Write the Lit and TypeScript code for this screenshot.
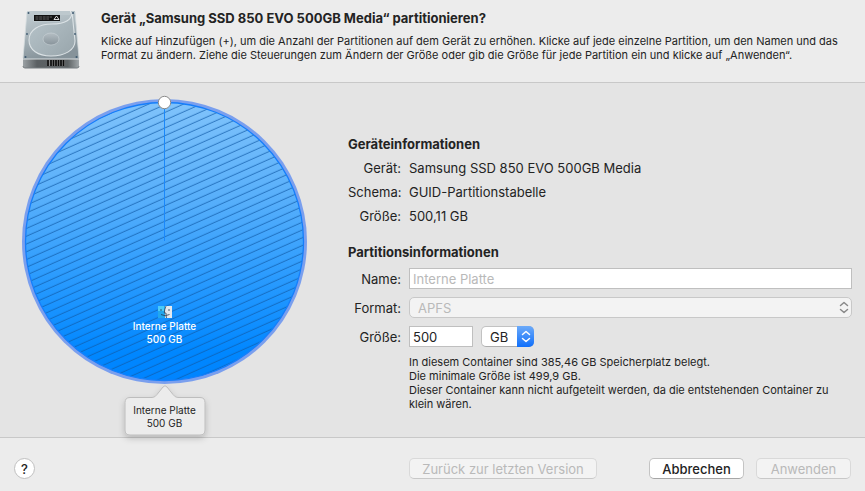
import { LitElement, html, css, svg } from "lit";
import { customElement, property } from "lit/decorators.js";

const CHEVRONS = svg`<path d="M1.5 4.5 L5 1.5 L8.5 4.5 M1.5 8.5 L5 11.5 L8.5 8.5" fill="none" stroke="currentColor" stroke-width="1.5" stroke-linecap="round" stroke-linejoin="round"/>`;

@customElement("drive-icon")
class DriveIcon extends LitElement {
  static styles = css`
    :host { display: block; width: 58px; height: 62px; }
    .drive { display: block; width: 100%; height: 100%; }
  `;
  render() {
    return html`<svg class="drive" viewBox="0 0 58 62" aria-hidden="true">
      <defs>
        <linearGradient id="top" x1="0" y1="0" x2="0.3" y2="1">
          <stop offset="0" stop-color="#c3ced3" /><stop offset="0.5" stop-color="#a9b5bb" /><stop offset="1" stop-color="#86939a" />
        </linearGradient>
        <linearGradient id="front" x1="0" y1="0" x2="1" y2="0">
          <stop offset="0" stop-color="#9ba1a4" /><stop offset="0.25" stop-color="#5b6063" /><stop offset="0.8" stop-color="#5d6264" /><stop offset="1" stop-color="#a0a6a9" />
        </linearGradient>
        <linearGradient id="disc" x1="0" y1="0" x2="1" y2="1">
          <stop offset="0" stop-color="#b9c6cc" /><stop offset="1" stop-color="#98a5ab" />
        </linearGradient>
        <linearGradient id="hub" x1="0" y1="0" x2="0" y2="1">
          <stop offset="0" stop-color="#b4bec3" /><stop offset="1" stop-color="#88949b" />
        </linearGradient>
      </defs>
      <path d="M1 50 H57 V57 Q57 59 55 59 H3 Q1 59 1 57 Z" fill="url(#front)" />
      <path d="M1 57 Q1 59 3 59 H55 Q57 59 57 57" fill="none" stroke="#777d80" />
      <path d="M6 2 H11 V12 H38 V6 H48 L49 2 H53 L57 50 H1 L5 3 Q5 2 6 2 Z" fill="url(#top)" />
      <path d="M11 2 H48 V6 H38 V13 H11 Z" fill="#bdc8cd" />
      <path d="M1 50 H57" stroke="#d7dddf" stroke-width="1.2" />
      <path d="M5 3 L1 49 M53 3 L57 49" stroke="#d3dadd" stroke-width="0.8" />
      <path d="M7 31 C7 21 17 15 30 15 C43 15 50 11 50 3 M50 3 L53 32 C53 41 43 47 29 47 C16 47 7 41 7 31" fill="url(#disc)" stroke="#dbe2e5" stroke-width="1.1" />
      <ellipse cx="29" cy="30" rx="8" ry="6" fill="url(#hub)" stroke="#c9d2d6" stroke-width="0.6" />
      <rect x="12" y="6" width="26" height="6" fill="#111" />
      <path d="M13.5 8 H30 M13.5 10 H27" stroke="#777" stroke-width="0.8" stroke-dasharray="3 0.6" />
      <path d="M32 10.5 L34.500 7 L37 10.500 Z" fill="none" stroke="#eee" stroke-width="0.9" />
      <g fill="#3f5a70"><circle cx="6.500" cy="4" r="1" /><circle cx="51" cy="4" r="1" /><circle cx="5" cy="25" r="0.900" /><circle cx="53" cy="25" r="0.900" /><circle cx="3.500" cy="48" r="1" /><circle cx="54.500" cy="48" r="1" /></g>
      <rect x="25" y="51" width="18" height="6" fill="#888" />
      <path d="M26 51 V57 M29 51 V57 M31.500 51 V57 M34 51 V57 M36.500 51 V57 M39 51 V57 M41.500 51 V57" stroke="#0c0c0c" stroke-width="1.7" />
    </svg>`;
  }
}

@customElement("partition-chart")
class PartitionChart extends LitElement {
  @property() name = "";
  @property() size = "";

  static styles = css`
    :host { display: block; position: relative; width: 285px; color: #232323; font-size: 10px; line-height: 13px; text-align: center; }
    .pie { display: block; width: 285px; height: 290px; }
    .label { position: absolute; left: 0; right: 0; top: 211px; color: #fff; font-weight: 500; }
    .finder { display: block; width: 16px; height: 12px; margin: 0 auto 2px; }
    .callout { position: absolute; left: 50%; top: 290px; transform: translateX(-50%); width: 99px; }
    .bubble { display: block; width: 99px; height: 62px; overflow: visible; }
    .caption { position: absolute; left: 0; right: 0; top: 19px; }
  `;

  render() {
    return html`
      <svg class="pie" viewBox="0 0 285 290" role="img" aria-label="${this.name} ${this.size}">
        <defs>
          <linearGradient id="fill" x1="0" y1="0" x2="0" y2="1">
            <stop offset="0" stop-color="#80c3fb" />
            <stop offset="0.35" stop-color="#57affb" />
            <stop offset="0.7" stop-color="#1f96ff" />
            <stop offset="0.9" stop-color="#0087ff" />
            <stop offset="1" stop-color="#0084ff" />
          </linearGradient>
          <pattern id="hatch" width="20" height="7.1" patternUnits="userSpaceOnUse" patternTransform="rotate(-24)">
            <path d="M0 3 H20" stroke="#0f5ca8" stroke-opacity="0.7" stroke-width="1" />
          </pattern>
        </defs>
        <circle cx="142.5" cy="146.5" r="142.5" fill="#7a9fee" />
        <circle cx="142.5" cy="146.5" r="139" fill="url(#fill)" />
        <circle cx="142.5" cy="146.5" r="139" fill="url(#hatch)" stroke="#157efb" stroke-width="1.3" />
        <path d="M142.500 12 V146" stroke="#1a88fb" />
        <circle cx="142.500" cy="7.500" r="6.200" fill="#fff" stroke="#8b8b8b" />
      </svg>
      <div class="label">
        <svg class="finder" viewBox="0 0 16 12" aria-hidden="true">
          <rect x="1" width="7" height="12" fill="#22a7ee" />
          <rect x="1" width="6" height="5" fill="#4ccbf8" />
          <rect x="8" width="7" height="12" fill="#e4e9ee" />
          <path d="M9 0 Q7.300 4 7.300 7 H9 Q9 10 9.500 12" fill="none" stroke="#33465c" stroke-width="0.800" />
          <path d="M4 3 V5 M12 3 V5 M4 8.500 Q8 11 12.500 8.500" fill="none" stroke="#263b55" stroke-width="0.800" />
        </svg>
        <div>${this.name}</div>
        <div>${this.size}</div>
      </div>
      <div class="callout">
        <svg class="bubble" viewBox="0 0 99 62" aria-hidden="true">
          <defs><filter id="shade" x="-20%" y="-20%" width="140%" height="150%"><feDropShadow dx="0" dy="3" stdDeviation="3" flood-opacity="0.2" /></filter></defs>
          <path filter="url(#shade)" d="M14.500 12.500 H36.500 Q39.500 12.500 41.500 9.500 L47.500 2 Q49.500 -0.500 51.500 2 L57.500 9.500 Q59.500 12.500 62.500 12.500 H84.500 Q89.500 12.500 89.500 17.500 V45 Q89.500 50 84.500 50 H14.500 Q9.500 50 9.500 45 V17.500 Q9.500 12.500 14.500 12.500 Z" fill="#ececec" stroke="#b9b9b9" stroke-width="0.900" />
        </svg>
        <div class="caption"><div>${this.name}</div><div>${this.size}</div></div>
      </div>`;
  }
}

@customElement("app-root")
class AppRoot extends LitElement {
  static styles = css`
    :host { display: flex; flex-direction: column; min-height: 100vh; box-sizing: border-box; background: #e4e4e4; color: #232323; font-family: Inter, "Liberation Sans", sans-serif; font-size: 13px; line-height: 16px; }
    .header { display: flex; gap: 21px; padding: 9px 13px 11px 22px; background: #ececec; border-bottom: 1px solid #c8c8c8; }
    .intro { padding-top: 1px; }
    .title, .section, .note { margin: 0; }
    .title, .section { font-size: 13px; line-height: 16px; font-weight: 700; }
    .note { font-size: 11px; line-height: 14px; }
    .line { display: block; white-space: nowrap; }
    .intro .note { margin-top: 8px; }
    .main { flex: 1; display: flex; gap: 41px; padding: 12px 13px 0 22px; }
    .chart { flex: none; }
    .details { flex: 1; min-width: 0; padding-top: 41px; }
    .grid { display: grid; grid-template-columns: 53px 1fr; column-gap: 8px; row-gap: 8px; margin: 8px 0 0; }
    .grid + .section { margin-top: 20px; }
    .key { text-align: right; white-space: nowrap; }
    .value { margin: 0; }
    .form { align-items: center; }
    .form .note { grid-column: 2; }
    .field, .menu, .button { box-sizing: border-box; height: 21px; margin: 0; font: inherit; color: inherit; }
    .field { width: 100%; padding: 0 3px; background: #fff; border: 1px solid #bfbfbf; border-radius: 0; }
    .field:disabled { color: #b9b9b9; }
    .pair { display: flex; gap: 8px; }
    .pair .field { width: 64px; }
    .select { position: relative; display: block; }
    .menu { appearance: none; display: block; width: 100%; padding: 0 8px; background: #fff; border: 1px solid #c2c2c2; border-bottom-color: #adadad; border-radius: 5px; }
    .menu:disabled { background: #f3f3f3; color: #b9b9b9; border-color: #c8c8c8; opacity: 1; }
    .unit { width: 53px; }
    .arrows { position: absolute; top: 0; bottom: 0; right: 0; width: 17px; display: flex; align-items: center; justify-content: center; color: #888; pointer-events: none; }
    .unit .arrows { color: #fff; background: linear-gradient(#6caaf9, #0f6ffb); border-radius: 0 5px 5px 0; }
    .chevrons { width: 10px; height: 13px; }
    .footer { display: flex; align-items: center; gap: 12px; padding: 20px 14px 12px; background: #ececec; border-top: 1px solid #c8c8c8; }
    .button { padding: 0; width: 95px; text-align: center; background: #fff; border: 1px solid #c4c4c4; border-bottom-color: #a6a6a6; border-radius: 5px; }
    .button:disabled { background: #f3f3f3; color: #b9b9b9; border-color: #d9d9d9; border-bottom-color: #c8c8c8; }
    .button.wide { width: 188px; margin-left: auto; margin-right: 40px; }
    .button.primary { font-weight: 500; }
    .button.help { width: 21px; border-radius: 50%; border-color: #c0c0c0; font-weight: 500; }
  `;

  private info = [
    ["Gerät:", "Samsung SSD 850 EVO 500GB Media"],
    ["Schema:", "GUID-Partitionstabelle"],
    ["Größe:", "500,11 GB"],
  ];

  private arrows() {
    return html`<span class="arrows"><svg class="chevrons" viewBox="0 0 10 13" aria-hidden="true">${CHEVRONS}</svg></span>`;
  }

  render() {
    return html`
      <header class="header">
        <drive-icon></drive-icon>
        <div class="intro">
          <h1 class="title">Gerät „Samsung SSD 850 EVO 500GB Media“ partitionieren?</h1>
          <p class="note">
            <span class="line">Klicke auf Hinzufügen (+), um die Anzahl der Partitionen auf dem Gerät zu erhöhen. Klicke auf jede einzelne Partition, um den Namen und das</span>
            <span class="line">Format zu ändern. Ziehe die Steuerungen zum Ändern der Größe oder gib die Größe für jede Partition ein und klicke auf „Anwenden“.</span>
          </p>
        </div>
      </header>
      <main class="main">
        <partition-chart class="chart" name="Interne Platte" size="500 GB"></partition-chart>
        <div class="details">
          <h2 class="section">Geräteinformationen</h2>
          <dl class="grid">
            ${this.info.map(([key, value]) => html`<dt class="key">${key}</dt><dd class="value">${value}</dd>`)}
          </dl>
          <h2 class="section">Partitionsinformationen</h2>
          <form class="grid form">
            <label class="key" for="name">Name:</label>
            <input class="field" id="name" type="text" value="Interne Platte" disabled />
            <label class="key" for="format">Format:</label>
            <span class="select"><select class="menu" id="format" disabled><option>APFS</option></select>${this.arrows()}</span>
            <label class="key" for="size">Größe:</label>
            <div class="pair">
              <input class="field" id="size" type="text" value="500" />
              <span class="select unit"><select class="menu" aria-label="Einheit"><option>GB</option></select>${this.arrows()}</span>
            </div>
            <p class="note">
              <span class="line">In diesem Container sind 385,46 GB Speicherplatz belegt.</span>
              <span class="line">Die minimale Größe ist 499,9 GB.</span>
              <span class="line">Dieser Container kann nicht aufgeteilt werden, da die entstehenden Container zu</span>
              <span class="line">klein wären.</span>
            </p>
          </form>
        </div>
      </main>
      <footer class="footer">
        <button class="button help" type="button" aria-label="Hilfe">?</button>
        <button class="button wide" type="button" disabled>Zurück zur letzten Version</button>
        <button class="button primary" type="button">Abbrechen</button>
        <button class="button" type="button" disabled>Anwenden</button>
      </footer>`;
  }
}
